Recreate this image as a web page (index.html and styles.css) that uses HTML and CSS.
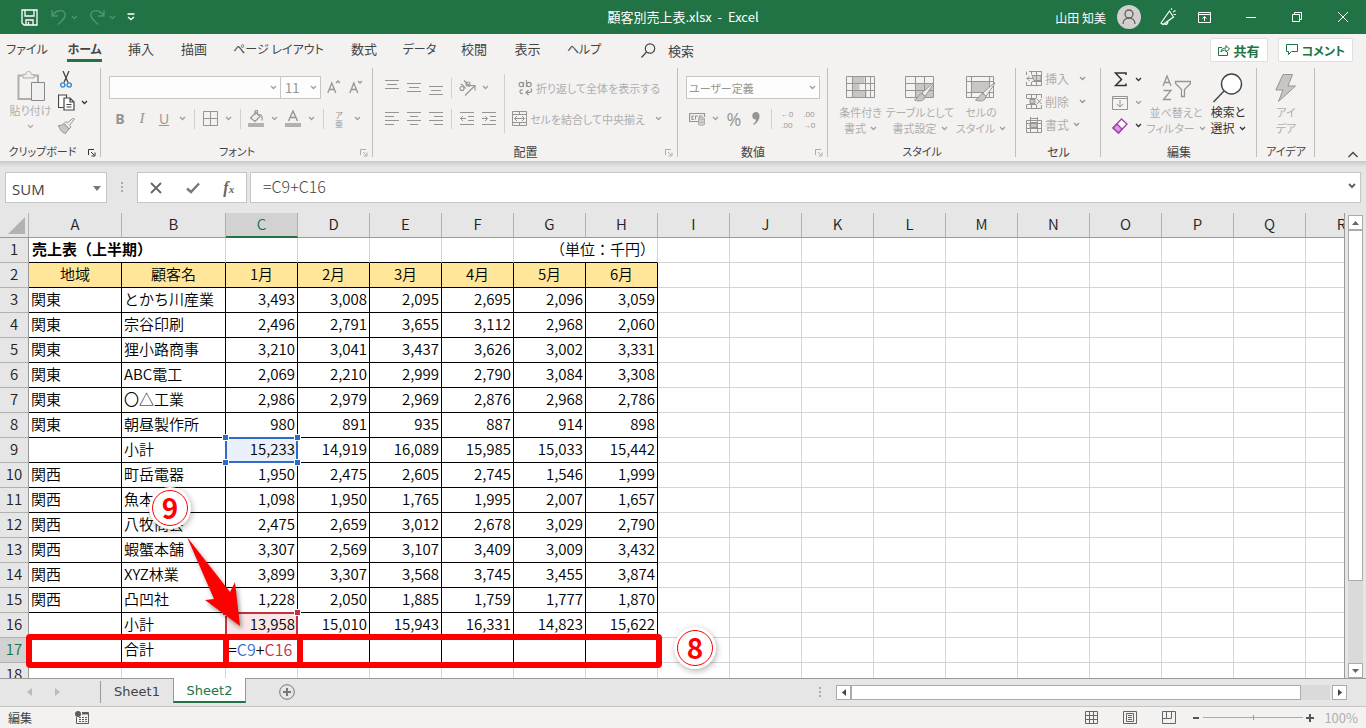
FILE: index.html
```html
<!DOCTYPE html>
<html lang="ja">
<head>
<meta charset="utf-8">
<title>顧客別売上表.xlsx - Excel</title>
<link rel="stylesheet" href="styles.css">
</head>
<body>

<svg class="defs" aria-hidden="true">
<symbol id="chev" viewBox="0 0 7 5"><path d="M1 1l2.500 2.500L6 1" fill="none" stroke="currentColor" stroke-width="1.300"/></symbol>
<symbol id="launch" viewBox="0 0 8 8"><path d="M.5 6V.5H6M3 3l3 3M7 3.500V7H3.500" fill="none" stroke="currentColor"/></symbol>
<symbol id="brush" viewBox="0 0 20 20"><path d="M19.500 .500L8 11l3 3.500L19.500 2z" fill="#eee" stroke="#979593"/><path d="M8 11.500c-3 0-3 4-7.500 6.500 5 2 10 1 10.500-3.500z" fill="#c8c6c4" stroke="#979593"/></symbol>
</svg>

<header class="titlebar">
	<div class="quick">
		<button aria-label="上書き保存"><svg width="17" height="17" viewBox="0 0 17 17" fill="none" stroke="#fff" stroke-width="1.300"><path d="M1 1h15v15H3l-2-2zM4 1v6h9V1M5 16v-5h7v5M7.500 13v3"/></svg></button>
		<button class="faded" aria-label="元に戻す"><svg width="16" height="17" viewBox="0 0 16 17" fill="none" stroke="currentColor" stroke-width="1.400"><path d="M1 1v6h6M1.500 6.500C5 1 12 0 14 4.500c1.500 4-3 6.500-7 11"/></svg></button>
		<button class="faded tiny" aria-label="元に戻す一覧"><svg width="7" height="5"><use href="#chev"/></svg></button>
		<button class="faded" aria-label="やり直し"><svg width="16" height="17" viewBox="0 0 16 17" fill="none" stroke="currentColor" stroke-width="1.400"><path d="M15 1v6H9M14.500 6.500C11 1 4 0 2 4.500c-1.500 4 3 6.500 7 11"/></svg></button>
		<button class="faded tiny" aria-label="やり直し一覧"><svg width="7" height="5"><use href="#chev"/></svg></button>
		<button aria-label="クイック アクセスのカスタマイズ"><svg width="8" height="8" viewBox="0 0 8 8" fill="none" stroke="#fff" stroke-width="1.400"><path d="M.5 1h7M1 4l3 2.500L7 4"/></svg></button>
	</div>
	<h1>顧客別売上表.xlsx&nbsp; -&nbsp; Excel</h1>
	<div class="account">
		<span>山田 知美</span>
		<svg class="avatar" width="24" height="24" viewBox="0 0 24 24"><circle cx="12" cy="12" r="12" fill="#d2d0ce"/><g fill="none" stroke="#605e5c" stroke-width="1.300"><circle cx="12" cy="9" r="4"/><path d="M6 19c0-8 12-8 12 0"/></g></svg>
		<button aria-label="近日公開の機能"><svg width="18" height="18" viewBox="0 0 18 18" fill="none" stroke="#fff" stroke-width="1.200"><path d="M10.500 3L2 15l2 1.500L14.500 9zM5.500 15c0 2.500 3.500 1.500 3.500-1.500M12 1.500l1-1M14 4l2.500-1.500M14.500 6.500H17"/></svg></button>
		<button class="display" aria-label="リボンの表示オプション"><svg width="13" height="11" viewBox="0 0 13 11" fill="none" stroke="#fff"><path d="M.5.5h12v10H.5zM.5 2.500h12M6.500 9V4.500M4.500 6.500l2-2 2 2"/></svg></button>
		<button class="win" aria-label="最小化"><svg width="10" height="10"><path d="M0 5.500h10" stroke="#fff"/></svg></button>
		<button class="win" aria-label="元のサイズに戻す"><svg width="10" height="10" fill="none" stroke="#fff"><path d="M.5 2.500h7v7h-7zM2.500 2.500v-2h7v7h-2"/></svg></button>
		<button class="win" aria-label="閉じる"><svg width="10" height="10" stroke="#fff"><path d="M0 0l10 10M10 0L0 10"/></svg></button>
	</div>
</header>

<nav class="tabs">
	<div class="tablist">
		<a href="#" class="kana">ファイル</a>
		<a href="#" class="kana active">ホーム</a>
		<a href="#">挿入</a>
		<a href="#">描画</a>
		<a href="#" class="kana">ページ レイアウト</a>
		<a href="#">数式</a>
		<a href="#" class="kana">データ</a>
		<a href="#">校閲</a>
		<a href="#">表示</a>
		<a href="#" class="kana">ヘルプ</a>
	</div>
	<button class="search"><svg width="15" height="15" viewBox="0 0 15 15" fill="none" stroke="#444" stroke-width="1.200"><circle cx="9" cy="5.500" r="4.700"/><path d="M5.500 9L.5 14.500"/></svg>検索</button>
	<div class="share">
		<button><svg width="12" height="12" viewBox="0 0 12 12" fill="none" stroke="#217346"><path d="M4 3.500H.5v8h9V8M3 8c0-3 2-4 5-4V1.500L11.500 5 8 8V6C5.500 6 4 6.500 3 8z"/></svg>共有</button>
		<button class="kana"><svg width="12" height="12" viewBox="0 0 12 12" fill="none" stroke="#217346"><path d="M.5.5h11v7h-6l-3 3v-3h-2z"/></svg>コメント</button>
	</div>
</nav>

<section class="ribbon">
	<div class="group clipboard">
		<div class="body">
			<button class="big">
				<svg width="28" height="31" viewBox="0 0 28 31" fill="none" stroke="#b0aeac"><path d="M14 28H1.500V4.500h4M17 4.500h4V11" stroke-width="2"/><path d="M6 7V3.500h2.500c0-4 6-4 6 0H17V7z" fill="#eee"/><path d="M14.500 11.500h13v18h-13z" fill="#f0f0f0" stroke="#888"/></svg>
				<span>貼り付け</span><svg width="7" height="5"><use href="#chev"/></svg>
			</button>
			<div class="stack">
				<div><button class="tool" aria-label="切り取り"><svg width="12" height="17" viewBox="0 0 12 17" fill="none"><path d="M3 0l5 11.500M9 0L4 11.500" stroke="#444" stroke-width="1.300"/><circle cx="2.800" cy="14" r="2.100" stroke="#2b88d8" stroke-width="1.400"/><circle cx="9.200" cy="14" r="2.100" stroke="#2b88d8" stroke-width="1.400"/></svg></button></div>
				<div class="on"><button class="tool" aria-label="コピー"><svg width="17" height="17" viewBox="0 0 17 17" fill="#fff" stroke="#444" stroke-width="1.200"><path d="M5.500 13.500h-5V1h8v3"/><path d="M6 4h6l4 4v8H6zM12 4v4h4M8.500 10.500h5M8.500 13h5"/></svg></button><button class="arrow" aria-label="コピーの種類"><svg width="7" height="5"><use href="#chev"/></svg></button></div>
				<div><button class="tool" aria-label="書式のコピー"><svg width="17" height="16" viewBox="0 0 17 16" fill="#c8c6c4" stroke="#979593"><path d="M16.500 1L14.500.5 9.500 5 8 3.500 6 5.500l5 5.500 2-2-1.500-1.500z" fill="#eee"/><path d="M6 5.500C4.500 7 3 7.500.5 7.500c1 4 3.500 7 7 8l3.500-4.500z"/></svg></button></div>
			</div>
		</div>
		<div class="caption">クリップボード<button class="launcher on" aria-label="クリップボードの詳細"><svg width="8" height="8"><use href="#launch"/></svg></button></div>
	</div>

	<div class="group font">
		<div class="body rows">
			<div class="row">
				<select class="fontname" aria-label="フォント"><option></option></select><select class="fontsize" aria-label="フォント サイズ"><option>11</option></select>
				<button class="tool" aria-label="拡大"><svg width="14" height="15" viewBox="0 0 14 15" fill="none" stroke="currentColor" stroke-width="1.300"><path d="M.8 13L4.800 3l4 10M2.200 9.500h5.200M9 3l2-2 2 2"/></svg></button><button class="tool" aria-label="縮小"><svg width="14" height="15" viewBox="0 0 14 15" fill="none" stroke="currentColor" stroke-width="1.300"><path d="M.8 13L4.800 3l4 10M2.200 9.500h5.200M9 1l2 2 2-2"/></svg></button>
			</div>
			<div class="row">
				<button class="tool letter"><b>B</b></button><button class="tool letter"><i>I</i></button><button class="tool letter"><u>U</u></button><button class="arrow" aria-label="下線の種類"><svg width="7" height="5"><use href="#chev"/></svg></button><span class="sep"></span>
				<button class="tool" aria-label="罫線"><svg width="15" height="15" viewBox="0 0 15 15" fill="none" stroke="currentColor"><path d="M.5.5h14v14H.5zM7.500.5v14M.5 7.500h14"/></svg></button><button class="arrow" aria-label="罫線の種類"><svg width="7" height="5"><use href="#chev"/></svg></button><span class="sep"></span>
				<button class="tool" aria-label="塗りつぶし"><svg width="16" height="17" viewBox="0 0 16 17"><path d="M2.500 8L8 2.500l4 4L7 11.500zM7 5V1.500c0-1.500 2.500-1.500 2.500 0V5M11 4.500c3 0 3.500 3 3 6" fill="#eee" stroke="currentColor" stroke-width="1.200"/><path d="M0 13h16v4H0z" fill="#b3b0ad"/></svg></button><button class="arrow" aria-label="塗りつぶしの色"><svg width="7" height="5"><use href="#chev"/></svg></button><button class="tool" aria-label="文字色"><svg width="16" height="17" viewBox="0 0 16 17"><path d="M3.500 11L8 1l4.500 10M5 7.500h6" fill="none" stroke="currentColor" stroke-width="1.400"/><path d="M0 13h16v4H0z" fill="#b3b0ad"/></svg></button><button class="arrow" aria-label="文字色の種類"><svg width="7" height="5"><use href="#chev"/></svg></button><span class="sep"></span>
				<button class="tool ruby"><span>ア</span><span>亜</span></button><button class="arrow" aria-label="ふりがなの種類"><svg width="7" height="5"><use href="#chev"/></svg></button>
			</div>
		</div>
		<div class="caption">フォント<button class="launcher" aria-label="フォントの詳細"><svg width="8" height="8"><use href="#launch"/></svg></button></div>
	</div>

	<div class="group align">
		<div class="body">
			<div class="rows">
				<div class="row">
					<button class="tool" aria-label="上揃え"><svg width="14" height="17" stroke="currentColor"><path d="M0 1.500h14M2 5.500h10M0 9.500h14"/></svg></button><button class="tool" aria-label="上下中央揃え"><svg width="14" height="17" stroke="currentColor"><path d="M0 4.500h14M2 8.500h10M0 12.500h14"/></svg></button><button class="tool" aria-label="下揃え"><svg width="14" height="17" stroke="currentColor"><path d="M0 7.500h14M2 11.500h10M0 15.500h14"/></svg></button><span class="sep"></span>
					<button class="tool" aria-label="方向"><svg width="17" height="16" viewBox="0 0 17 16" fill="none" stroke="currentColor" stroke-width="1.100"><path d="M6 15.500L15.500 6M11 5.500h5v5"/><circle cx="3" cy="8.500" r="2"/><path d="M1.500 4.500c2-1 3 1 5 4M5 .5l6 6"/><circle cx="9" cy="4" r="2"/></svg></button><button class="arrow" aria-label="方向の種類"><svg width="7" height="5"><use href="#chev"/></svg></button>
				</div>
				<div class="row">
					<button class="tool" aria-label="左揃え"><svg width="14" height="14" stroke="currentColor"><path d="M0 .5h14M0 4.500h9M0 8.500h14M0 12.500h9"/></svg></button><button class="tool" aria-label="中央揃え"><svg width="14" height="14" stroke="currentColor"><path d="M0 .5h14M3 4.500h8M0 8.500h14M3 12.500h8"/></svg></button><button class="tool" aria-label="右揃え"><svg width="14" height="14" stroke="currentColor"><path d="M0 .5h14M5 4.500h9M0 8.500h14M5 12.500h9"/></svg></button><span class="sep"></span>
					<button class="tool" aria-label="インデントを減らす"><svg width="14" height="14" fill="none" stroke="currentColor"><path d="M0 .5h14M8 4.500h6M8 8.500h6M0 12.500h14M6 6.500H.5M3 4L.5 6.500 3 9"/></svg></button><button class="tool" aria-label="インデントを増やす"><svg width="14" height="14" fill="none" stroke="currentColor"><path d="M0 .5h14M8 4.500h6M8 8.500h6M0 12.500h14M0 6.500h5.500M3 4l2.500 2.500L3 9"/></svg></button>
				</div>
			</div>
			<span class="sep tall"></span>
			<div class="rows">
				<button class="row wide"><svg width="15" height="17" viewBox="0 0 15 17" fill="none" stroke="currentColor" stroke-width="1.200"><circle cx="3.200" cy="5.500" r="2.200"/><path d="M5.500 3v5M8.500 1v7M5 11c-4-1.500-4 4.500 0 3.500M13 9.500c2 4-1 4-5 4M10.500 11L8 13.500l2.500 2.500"/><circle cx="11" cy="5.500" r="2.200"/></svg>折り返して全体を表示する</button>
				<div class="row"><button class="row wide"><svg width="15" height="15" viewBox="0 0 15 15" fill="none" stroke="currentColor"><path d="M.5.5h14v14H.5zM7.500.5v3M7.500 11.500v3M.5 3.500h14M.5 11.500h14"/><path d="M2.500 7.500h10M5 5L2.500 7.500 5 10M10 5l2.500 2.500L10 10"/></svg>セルを結合して中央揃え</button><button class="arrow" aria-label="結合の種類"><svg width="7" height="5"><use href="#chev"/></svg></button></div>
			</div>
		</div>
		<div class="caption">配置<button class="launcher" aria-label="配置の詳細"><svg width="8" height="8"><use href="#launch"/></svg></button></div>
	</div>

	<div class="group number">
		<div class="body rows">
			<div class="row"><select class="format" aria-label="表示形式"><option>ユーザー定義</option></select></div>
			<div class="row">
				<button class="tool" aria-label="通貨"><svg width="17" height="14" viewBox="0 0 17 14" fill="none" stroke="currentColor"><path d="M9 9.500H.5v-8h15V5M5 4H3v3.500h2M6.500 7.500V4H9M10.500 6V4h3" stroke-width="1.200"/><path d="M9.500 6.500v6c0 1.300 6 1.300 6 0v-6c0-1.300-6-1.300-6 0s6 1.300 6 0M9.500 9.500c0 1.300 6 1.300 6 0" fill="#d2d0ce" stroke="#b0aeac"/></svg></button><button class="arrow" aria-label="通貨の種類"><svg width="7" height="5"><use href="#chev"/></svg></button><button class="tool percent">%</button><button class="tool" aria-label="桁区切り"><svg width="8" height="13" viewBox="0 0 8 13"><path d="M4 0c5 0 5 9-2 13l-1-1c2-1.500 3-3 3-4.500C-1 8-1 0 4 0z" fill="currentColor"/></svg></button><span class="sep"></span>
				<button class="tool decimal"><span>←0</span><span>.00</span></button><button class="tool decimal"><span>.00</span><span>→0</span></button>
			</div>
		</div>
		<div class="caption">数値<button class="launcher" aria-label="数値の詳細"><svg width="8" height="8"><use href="#launch"/></svg></button></div>
	</div>

	<div class="group styles">
		<div class="body">
			<button class="big"><svg width="29" height="28" viewBox="0 0 29 28" fill="none" stroke="#979593"><path d="M6.500 3h12v7h-5v7h7v7h-14z" fill="#c8c6c4" stroke="none"/><path d="M.5 2.500h28v21H.5zM6.500 2.500v21M19.500 2.500v21M24.500 2.500v21M.5 9.500h28M.5 16.500h28"/></svg><span>条件付き</span><span>書式 <svg width="7" height="5"><use href="#chev"/></svg></span></button>
			<button class="big"><svg width="31" height="28" viewBox="0 0 31 28"><path d="M10 10h18v13H10z" fill="#c8c6c4"/><path d="M.5 2.500h28v21H.5zM10.500 2.500v21M19.500 2.500v21M.5 9.500h28M.5 16.500h28" fill="none" stroke="#979593"/><use href="#brush" x="8" y="8" width="22" height="20"/></svg><span>テーブルとして</span><span>書式設定 <svg width="7" height="5"><use href="#chev"/></svg></span></button>
			<button class="big"><svg width="31" height="28" viewBox="0 0 31 28"><path d="M6 8h18v10H6z" fill="#c8c6c4"/><path d="M.5 2.500h27v21H.5zM5.500 2.500v21M23.500 2.500v21M.5 7.500h27M.5 18.500h27" fill="none" stroke="#979593"/><use href="#brush" x="8" y="8" width="22" height="20"/></svg><span>セルの</span><span>スタイル <svg width="7" height="5"><use href="#chev"/></svg></span></button>
		</div>
		<div class="caption">スタイル</div>
	</div>

	<div class="group cells">
		<div class="body stack">
			<button><svg width="16" height="15" viewBox="0 0 16 15" fill="none" stroke="currentColor"><path d="M6 4.500h9v5H8z" fill="#d2d0ce"/><path d="M3 .5h12.500v14H.5V11M.5 4V.5M5.500.5v3M10.500.5v14M5.500 11v3M6 10.500h9M7 7.500H.5M3.500 5L1 7.500 3.500 10"/></svg><span>挿入</span><svg width="7" height="5"><use href="#chev"/></svg></button>
			<button><svg width="16" height="15" viewBox="0 0 16 15" fill="none" stroke="currentColor"><path d="M4 5.500h5v4H4z" fill="#c8c6c4"/><path d="M.5 4V.5h15V4M5.500.5V4M10.500.5V4M.5 11v3.500h15V11M5.500 11v3.500M10.500 11v3.500M.5 4.500h10M.5 10.500h10M11 5l4.500 5M15.500 5L11 10"/></svg><span>削除</span><svg width="7" height="5"><use href="#chev"/></svg></button>
			<button class="near"><svg width="16" height="16" viewBox="0 0 16 16" fill="none" stroke="currentColor"><path d="M4 5.500h7v5H4z" fill="#c8c6c4"/><path d="M.5 3.500h15v12H.5zM4.500 0v15M11.500 0v15M.5 6.500h15M.5 11.500h15M4.500 1.500h7"/></svg><span>書式</span><svg width="7" height="5"><use href="#chev"/></svg></button>
		</div>
		<div class="caption">セル</div>
	</div>

	<div class="group edit">
		<div class="body">
			<div class="stack">
				<div class="on"><button class="tool" aria-label="合計"><svg width="13" height="15" viewBox="0 0 13 15" fill="none" stroke="#333" stroke-width="1.500"><path d="M12 3V1H1.500l6 6.500-6 6H12v-2"/></svg></button><button class="arrow" aria-label="合計の種類"><svg width="7" height="5"><use href="#chev"/></svg></button></div>
				<div><button class="tool" aria-label="フィル"><svg width="16" height="14" viewBox="0 0 16 14" fill="none" stroke="currentColor"><path d="M.5.5h15v13H.5zM.5 2.500h15M8 4v7M5 8l3 3 3-3"/></svg></button><button class="arrow" aria-label="フィルの種類"><svg width="7" height="5"><use href="#chev"/></svg></button></div>
				<div class="on"><button class="tool" aria-label="クリア"><svg width="16" height="16" viewBox="0 0 16 16" stroke="#a33bab" stroke-width="1.300"><path d="M9.500 1L15 6 6.500 15 1 10z" fill="#fff"/><path d="M5 6l5 5-3.500 4L1 10z" fill="#d59dda"/></svg></button><button class="arrow" aria-label="クリアの種類"><svg width="7" height="5"><use href="#chev"/></svg></button></div>
			</div>
			<button class="big"><svg width="29" height="28" viewBox="0 0 29 28" fill="none" stroke="#979593" stroke-width="1.300"><path d="M1 12L5 2l4 10M2.500 8.500h5M1.500 16.500H9l-7.500 9H9M13.500 7.500h15v2l-6 6v7h-3v-7l-6-6z"/></svg><span>並べ替えと</span><span>フィルター <svg width="7" height="5"><use href="#chev"/></svg></span></button>
			<button class="big on"><svg width="30" height="30" viewBox="0 0 30 30" fill="#fff" stroke="#444" stroke-width="1.400"><circle cx="18.500" cy="11" r="10"/><path d="M11 18L.5 29"/></svg><span>検索と</span><span>選択 <svg width="7" height="5"><use href="#chev"/></svg></span></button>
		</div>
		<div class="caption">編集</div>
	</div>

	<div class="group ideas">
		<div class="body"><button class="big"><svg width="22" height="28" viewBox="0 0 22 28"><path d="M8 .5h9.500L13 12h7.500L3.500 27.500 8 16H.8z" fill="#c8c6c4" stroke="#979593"/></svg><span>アイ</span><span>デア</span></button></div>
		<div class="caption">アイデア</div>
	</div>
	<button class="collapse" aria-label="リボンを折りたたむ"><svg width="10" height="7" fill="none" stroke="#444" stroke-width="1.400"><path d="M.5 6L5 1.500 9.500 6"/></svg></button>
</section>

<section class="formulabar">
	<div class="namebox"><input value="SUM" aria-label="名前ボックス"><svg width="8" height="5"><path d="M0 0h8L4 5z" fill="#777"/></svg></div>
	<span class="dots"></span>
	<div class="fxbuttons">
		<button aria-label="キャンセル"><svg width="12" height="12" stroke="#666" stroke-width="1.800"><path d="M1 1l10 10M11 1L1 11"/></svg></button>
		<button aria-label="入力"><svg width="14" height="12" fill="none" stroke="#777" stroke-width="2.400"><path d="M1 6.500L5 10l8-8.500"/></svg></button>
		<button class="fx" aria-label="関数の挿入"><i>f<small>x</small></i></button>
	</div>
	<div class="formula"><input value="=C9+C16" aria-label="数式バー"><svg width="8" height="6" fill="none" stroke="#666" stroke-width="2"><path d="M1 1l3 3 3-3"/></svg></div>
</section>

<main class="workspace">
	<div class="sheet">
		<table id="grid"></table>
		<div class="mark-row"></div>
		<div class="mark-cell"></div>
		<svg class="mark-arrow" width="60" height="96" viewBox="0 0 60 96"><path d="M2 2l43 55 5-10 5 44-35-26 9-1z" fill="#f00"/></svg>
		<div class="badge nine">9</div>
		<div class="badge eight">8</div>
	</div>
	<div class="vscroll">
		<button aria-label="上へ"><svg width="7" height="4"><path d="M0 4h7L3.500 0z" fill="#666"/></svg></button>
		<div class="track"><div class="thumb"></div></div>
		<button aria-label="下へ"><svg width="7" height="4"><path d="M0 0h7L3.500 4z" fill="#666"/></svg></button>
	</div>
</main>

<section class="sheettabs">
	<div class="navs">
		<button aria-label="前のシート"><svg width="5" height="8"><path d="M5 0v8L0 4z" fill="#bbb"/></svg></button>
		<button aria-label="次のシート"><svg width="5" height="8"><path d="M0 0v8l5-4z" fill="#bbb"/></svg></button>
	</div>
	<button class="sheettab">Sheet1</button>
	<button class="sheettab current">Sheet2</button>
	<button class="addsheet" aria-label="新しいシート"><svg width="16" height="16" viewBox="0 0 16 16" fill="none" stroke="#777"><circle cx="8" cy="8" r="7.300"/><path d="M4 8h8M8 4v8" stroke-width="2"/></svg></button>
	<span class="dots"></span>
	<div class="hscroll">
		<button aria-label="左へ"><svg width="4" height="7"><path d="M4 0v7L0 3.500z" fill="#444"/></svg></button>
		<div class="track"><div class="thumb"></div></div>
		<button aria-label="右へ"><svg width="4" height="7"><path d="M0 0v7l4-3.500z" fill="#444"/></svg></button>
	</div>
</section>

<footer class="status">
	<span>編集</span>
	<button aria-label="マクロの記録"><svg width="14" height="13" viewBox="0 0 14 13" fill="none" stroke="#605e5c"><path d="M1.500 6v6.500h12v-11H7M7 3h6.500M4 6.500h2M7 6.500h2M10 6.500h2M4 8.500h2M7 8.500h2M10 8.500h2M4 10.500h2M7 10.500h2M10 10.500h2"/><path d="M7 2h6" stroke-width="2"/><circle cx="3" cy="3" r="3" fill="#605e5c" stroke="none"/></svg></button>
	<div class="views">
		<button aria-label="標準"><svg width="13" height="13" fill="none" stroke="#666"><path d="M.5.5h12v12H.5zM4.500.5v12M8.500.5v12M.5 4.500h12M.5 8.500h12"/></svg></button>
		<button aria-label="ページ レイアウト"><svg width="14" height="13" fill="none" stroke="#666"><path d="M.5.5h13v12H.5zM3.500 2.500h7v8h-7zM5 4.500h4M5 6.500h4M5 8.500h4"/></svg></button>
		<button aria-label="改ページ プレビュー"><svg width="14" height="13" fill="none" stroke="#666"><path d="M.5.5h13v12H.5zM4.500.5v7M9.500.5v7M.5 7.500h9"/></svg></button>
	</div>
	<button aria-label="縮小"><svg width="6" height="6"><path d="M0 3h6" stroke="#555" stroke-width="2"/></svg></button>
	<input type="range" min="0" max="100" value="50" aria-label="ズーム">
	<button aria-label="拡大"><svg width="8" height="8"><path d="M0 4h8M4 0v8" stroke="#555" stroke-width="2"/></svg></button>
	<span class="zoom">100%</span>
</footer>

<script src="script.js"></script>
</body>
</html>
```

FILE: script.js
```js
/* Rows 2 to 17 of the sheet, columns A to H. */
var rows = [
	["地域", "顧客名", "1月", "2月", "3月", "4月", "5月", "6月"],
	["関東", "とかち川産業", "3,493", "3,008", "2,095", "2,695", "2,096", "3,059"],
	["関東", "宗谷印刷", "2,496", "2,791", "3,655", "3,112", "2,968", "2,060"],
	["関東", "狸小路商事", "3,210", "3,041", "3,437", "3,626", "3,002", "3,331"],
	["関東", "ABC電工", "2,069", "2,210", "2,999", "2,790", "3,084", "3,308"],
	["関東", "〇△工業", "2,986", "2,979", "2,969", "2,876", "2,968", "2,786"],
	["関東", "朝昼製作所", "980", "891", "935", "887", "914", "898"],
	["", "小計", "15,233", "14,919", "16,089", "15,985", "15,033", "15,442"],
	["関西", "町岳電器", "1,950", "2,475", "2,605", "2,745", "1,546", "1,999"],
	["関西", "魚本水産", "1,098", "1,950", "1,765", "1,995", "2,007", "1,657"],
	["関西", "八牧商会", "2,475", "2,659", "3,012", "2,678", "3,029", "2,790"],
	["関西", "蝦蟹本舗", "3,307", "2,569", "3,107", "3,409", "3,009", "3,432"],
	["関西", "XYZ林業", "3,899", "3,307", "3,568", "3,745", "3,455", "3,874"],
	["関西", "凸凹社", "1,228", "2,050", "1,885", "1,759", "1,777", "1,870"],
	["", "小計", "13,958", "15,010", "15,943", "16,331", "14,823", "15,622"],
	["", "合計", "", "", "", "", "", ""]
];
var letters = "ABCDEFGHIJKLMNOPQR".split("");
var handles = '<i class="tl"></i><i class="tr"></i><i class="bl"></i><i class="br"></i>';

/* Empty cells from column I on. */
function blanks(n) {
	return new Array(n + 1).join("<td></td>");
}

function cell(text, row, col) {
	var name = letters[col] + row;
	var cls = "data" + (row == 2 ? " head" : col > 1 ? " num" : "");

	if (name == "C9") {
		return '<td class="' + cls + ' ref blue">' + text + handles + "</td>";
	}
	if (name == "C16") {
		return '<td class="' + cls + ' ref red">' + text + handles + "</td>";
	}
	if (name == "C17") {
		return '<td class="data entry">=<span class="c9">C9</span>+<span class="c16">C16</span></td>';
	}
	return '<td class="' + cls + '">' + text + "</td>";
}

var html = '<colgroup><col class="nums"><col class="a"><col class="b"><col span="16"></colgroup>';

html += '<thead><tr><th class="corner"><svg width="17" height="17"><path d="M17 0v17H0z" fill="#b2b2b2"/></svg></th>';
letters.forEach(function (l) {
	html += "<th" + (l == "C" ? ' class="sel"' : "") + ">" + l + "</th>";
});
html += "</tr></thead><tbody>";

html += '<tr class="first"><th>1</th><td colspan="2" class="heading">売上表（上半期）</td>' + blanks(4) +
	'<td colspan="2" class="num">（単位：千円）</td>' + blanks(10) + "</tr>";

rows.forEach(function (r, i) {
	var n = i + 2;
	html += "<tr><th" + (n == 17 ? ' class="sel"' : "") + ">" + n + "</th>";
	r.forEach(function (text, col) {
		html += cell(text, n, col);
	});
	html += blanks(10) + "</tr>";
});
html += "<tr><th>18</th>" + blanks(18) + "</tr></tbody>";

document.getElementById("grid").innerHTML = html;
```

FILE: styles.css
```css
* {
	box-sizing: border-box;
}

body {
	margin: 0;
	height: 100vh;
	display: flex;
	flex-direction: column;
	overflow: hidden;
	background: #e6e6e6;
	color: #444;
	font-family: "Noto Sans CJK JP", sans-serif;
	font-size: 12px;
	font-feature-settings: "palt";
}

button, input, select {
	font: inherit;
	font-feature-settings: inherit;
	color: inherit;
	border: 0;
	margin: 0;
	padding: 0;
	background: none;
}

button {
	display: flex;
	align-items: center;
	justify-content: center;
	white-space: nowrap;
}

svg {
	display: block;
	flex: none;
}

.defs {
	width: 0;
	height: 0;
	position: absolute;
}

/* title bar */
.titlebar {
	height: 34px;
	flex: none;
	display: grid;
	grid-template-columns: 1fr auto 1fr;
	align-items: center;
	background: #217346;
	color: #fff;
}

.titlebar h1 {
	margin: 0;
	font-size: 13px;
	line-height: 28px;
	font-weight: normal;
	font-feature-settings: normal;
}

.quick {
	display: flex;
	align-items: center;
	padding-left: 18px;
}

.quick button {
	width: 22px;
}

.quick .faded {
	width: 20px;
	margin-left: 9px;
}

.quick .tiny {
	width: 8px;
	margin-left: 1px;
}

.quick button:last-child {
	margin-left: 4px;
}

.faded {
	color: #4f9470;
}

.account {
	display: flex;
	align-items: center;
	justify-content: flex-end;
}

.avatar {
	margin: 0 9px 0 11px;
}

.account button {
	width: 36px;
}

.account .display {
	margin-right: 6px;
}

.account .win {
	width: 46px;
}

/* ribbon tabs */
.tabs {
	height: 32px;
	flex: none;
	display: flex;
	align-items: center;
	background: #f3f2f1;
	font-size: 13px;
}

.tablist {
	display: grid;
	grid-template-columns: 54px 61px 52px 54px 115px 56px 55px 54px 53px 60px;
	align-self: stretch;
	justify-items: center;
}

.tablist a {
	height: 28px;
	line-height: 30px;
	color: #444;
	text-decoration: none;
	white-space: nowrap;
}

.tabs .kana {
	font-size: 12px;
}

.tablist .active {
	font-weight: bold;
	border-bottom: 3px solid #217346;
}

.search {
	gap: 12px;
	margin-left: 27px;
}

.share {
	display: flex;
	gap: 10px;
	margin-left: auto;
	padding-right: 13px;
}

.share button {
	height: 24px;
	gap: 4px;
	padding: 0 7px;
	background: #fff;
	border: 1px solid #e1dfdd;
	border-radius: 2px;
	color: #217346;
	font-weight: bold;
}

/* ribbon */
.ribbon {
	height: 95px;
	flex: none;
	display: flex;
	background: #f3f2f1;
	color: #b0aeac;
}

.group {
	display: flex;
	flex-direction: column;
	background: linear-gradient(#c0bebc, #c0bebc) right 2px / 1px 89px no-repeat;
}

.clipboard { width: 101px; }
.font { width: 272px; }
.align { width: 305px; }
.number { width: 150px; }
.styles { width: 188px; }
.cells { width: 85px; }
.edit { width: 156px; }
.ideas { width: 58px; }

.body {
	flex: 1;
	display: flex;
	padding: 0 0 0 8px;
}

.clipboard .body {
	padding: 0 6px;
}

.caption {
	height: 19px;
	position: relative;
	text-align: center;
	line-height: 19px;
	color: #444;
}

.clipboard .caption {
	padding-right: 16px;
	font-size: 11px;
}

.ideas .caption, .font .caption, .styles .caption {
	font-size: 11px;
}

.launcher {
	position: absolute;
	right: 5px;
	top: 7px;
	color: #b0aeac;
}

.rows, .body.rows {
	display: flex;
	flex-direction: column;
	gap: 8px;
	padding-top: 10px;
}

.row {
	height: 23px;
	display: flex;
	align-items: center;
}

.tool {
	width: 22px;
	height: 22px;
	color: #979593;
}

.arrow {
	width: 15px;
	height: 22px;
	color: #a19f9d;
}

.big > span svg {
	color: #a19f9d;
}

.ribbon .on, .ribbon .on .arrow, .ribbon .on svg {
	color: #333;
}

.sep {
	width: 1px;
	height: 20px;
	margin: 0 4px;
	background: #d2d0ce;
}

.sep.tall {
	height: 59px;
	margin-top: 8px;
}

.letter {
	font-family: "Open Sans", sans-serif;
	font-size: 14px;
}

.letter i {
	font-family: "Liberation Serif", serif;
	font-size: 15px;
}

.percent {
	font-family: "Open Sans", sans-serif;
	font-size: 18px;
}

.ruby, .decimal {
	flex-direction: column;
	font-size: 8px;
	line-height: 9px;
}

.decimal {
	font-family: "Open Sans", sans-serif;
	font-size: 8px;
	line-height: 11px;
}

.ribbon select {
	flex: none;
	height: 23px;
	padding: 0 4px;
	border: 1px solid #c8c6c4;
	appearance: none;
	color: #979593;
	background: #fdfdfd url("data:image/svg+xml,%3Csvg xmlns='http://www.w3.org/2000/svg' width='7' height='5'%3E%3Cpath d='M1 1l2.500 2.500L6 1' fill='none' stroke='%23a19f9d' stroke-width='1.300'/%3E%3C/svg%3E") right 3px center no-repeat;
}

.ribbon .fontname {
	width: 172px;
}

.ribbon .fontsize {
	width: 40px;
	margin-right: 2px;
	font-size: 13px;
	border-left-width: 0;
}

.ribbon .format {
	width: 134px;
	padding: 0 2px;
	font-size: 11px;
}

.wide {
	gap: 3px;
	padding-left: 3px;
	font-size: 11px;
}

.wide + .arrow {
	margin-left: 6px;
}

.wide svg {
	color: #979593;
}

.big {
	flex-direction: column;
	justify-content: flex-start;
	height: 70px;
	padding-top: 5px;
	font-size: 11px;
	line-height: 16px;
}

.big > svg:first-child {
	margin: auto;
}

.big > span {
	display: flex;
	align-items: center;
	gap: 4px;
}

.clipboard .big {
	width: 49px;
}

.clipboard .big > svg:last-child {
	margin: 6px 0 7px;
}

.styles .body {
	display: grid;
	grid-template-columns: 49px 70px 52px;
}

.stack {
	display: flex;
	flex-direction: column;
	padding-top: 2px;
}

.stack > * {
	height: 23px;
	display: flex;
	align-items: center;
}

.cells .stack {
	padding: 1px 10px 0;
	align-items: flex-start;
}

.cells .stack button {
	gap: 3px;
	color: #b0aeac;
}

.cells .stack svg {
	color: #979593;
}

.cells .stack svg:last-child {
	margin-left: 7px;
}

.cells .near svg:last-child {
	margin-left: 1px;
}

.edit .big {
	width: 60px;
}

.edit .big.on {
	width: 44px;
	font-size: 12px;
}

.ideas .body {
	padding: 0;
	justify-content: center;
}

.collapse {
	margin: auto 8px 3px auto;
}

/* formula bar */
.formulabar {
	flex: none;
	display: flex;
	align-items: center;
	height: 52px;
	padding: 1px 5px 0;
	background: linear-gradient(#c8c8c8, #e6e6e6 6px);
}

.namebox, .fxbuttons, .formula {
	height: 31px;
	display: flex;
	align-items: center;
	background: #fff;
	border: 1px solid #c6c6c6;
}

.namebox {
	width: 102px;
	padding: 2px 5px 0 6px;
}

.namebox input, .formula input {
	flex: 1;
	min-width: 0;
	font-family: "Open Sans", sans-serif;
	font-size: 15px;
}

.dots {
	width: 2px;
	height: 11px;
	margin: 0 14px;
	background: repeating-linear-gradient(#aaa 0 2px, transparent 2px 4px);
}

.fxbuttons {
	width: 110px;
	justify-content: space-around;
}

.fx {
	font-family: "Liberation Serif", serif;
	font-weight: bold;
	font-size: 16px;
	color: #666;
}

.fx small {
	font-size: 11px;
}

.formula {
	flex: 1;
	margin-left: 3px;
	padding: 0 4px 3px 12px;
}

.formula input {
	font-family: "Noto Sans CJK JP", sans-serif;
	font-size: 16px;
	font-weight: 300;
	line-height: 24px;
	font-feature-settings: normal;
}

/* sheet */
.workspace {
	flex: 1;
	min-height: 0;
	display: flex;
}

.sheet {
	flex: 1;
	position: relative;
	overflow: hidden;
	border-right: 1px solid #999;
	background: #fff;
}

table {
	width: 1378px;
	table-layout: fixed;
	border-collapse: separate;
	border-spacing: 0;
	font-size: 15px;
	font-weight: 350;
	line-height: 22px;
	font-feature-settings: normal;
	color: #000;
}

col { width: 72px; }
.nums { width: 29px; }
.a { width: 93px; }
.b { width: 104px; }

th, td {
	height: 25px;
	padding: 0 2px 2px;
	border-right: 1px solid #d4d4d4;
	border-bottom: 1px solid #d4d4d4;
	white-space: nowrap;
}

th {
	padding: 0 0 2px;
	font-weight: 350;
	background: #e6e6e6;
	border-color: #b1b1b1;
	color: #222;
}

thead th {
	border-bottom-color: #999;
}

tbody th {
	border-right-color: #999;
}

.corner svg {
	margin: 3px 0 0 8px;
}

th.sel {
	background: #d2d2d2;
	color: #217346;
}

thead .sel {
	padding-bottom: 1px;
	border-bottom: 2px solid #217346;
}

td.data, .first td:nth-child(-n+7) {
	border-bottom-color: #000;
}

td.data {
	border-right-color: #000;
}

.head {
	background: #ffe699;
	text-align: center;
}

.num {
	text-align: right;
}

.heading {
	padding-left: 3px;
	font-weight: bold;
}

.ref {
	position: relative;
}

.ref::before {
	content: "";
	position: absolute;
	inset: -1px;
	border: 2px solid;
}

.blue { background: #e9f0fa; }
.blue::before { border-color: #2f6bc8; }
.blue i { background: #2f6bc8; }
.red { background: #f9e7e8; }
.red::before { border-color: #c4323f; }
.red i { background: #c4323f; }

.ref i {
	position: absolute;
	width: 5px;
	height: 5px;
	outline: 1px solid #fff;
}

.tl { left: -3px; top: -3px; }
.tr { right: -3px; top: -3px; }
.bl { left: -3px; bottom: -3px; }
.br { right: -3px; bottom: -3px; }

.entry {
	font-size: 16px;
}

.c9 { color: #3c6cc8; }
.c16 { color: #c4323f; }

/* red marks over the sheet */
.mark-row, .mark-cell {
	position: absolute;
	top: 421px;
	height: 34px;
	border: 6px solid #f00;
}

.mark-row {
	left: 26px;
	width: 636px;
	border-radius: 4px;
}

.mark-cell {
	left: 223px;
	width: 80px;
}

.mark-arrow {
	position: absolute;
	left: 185px;
	top: 322px;
	filter: drop-shadow(2px 3px 2px rgba(0, 0, 0, .4));
}

.badge {
	position: absolute;
	width: 36px;
	height: 36px;
	border: 1px solid #f00;
	border-radius: 50%;
	background: #fff;
	box-shadow: 0 0 0 3px #fff, 1px 2px 6px 3px rgba(0, 0, 0, .3);
	color: #f00;
	font: bold 28px/32px "Noto Sans CJK JP", sans-serif;
	text-align: center;
}

.nine { left: 152px; top: 277px; }
.eight { left: 677px; top: 417px; }

/* scroll bars */
.vscroll {
	width: 21px;
	display: flex;
	flex-direction: column;
	align-items: center;
	padding: 2px 0 0;
}

.vscroll button, .hscroll button {
	width: 15px;
	height: 15px;
	background: #fff;
	border: 1px solid #ababab;
}

.vscroll .track {
	flex: 1;
	width: 15px;
	background: #dadada;
}

.track .thumb {
	background: #fff;
	border: 1px solid #ababab;
}

.vscroll .thumb {
	height: 81%;
}

/* sheet tabs */
.sheettabs {
	flex: none;
	height: 28px;
	display: flex;
	align-items: flex-start;
	border-top: 1px solid #999;
	font-family: "DejaVu Sans", sans-serif;
	font-size: 13px;
}

.navs {
	display: flex;
	gap: 23px;
	width: 101px;
	height: 22px;
	margin-top: 2px;
	padding-left: 27px;
	border-right: 1px solid #999;
}

.sheettab {
	width: 72px;
	height: 25px;
}

.sheettab.current {
	width: 73px;
	margin-top: -1px;
	padding-top: 2px;
	background: #fff;
	border: 1px solid #999;
	border-top: 0;
	border-bottom: 2px solid #217346;
	color: #217346;
}

.addsheet {
	height: 25px;
	margin-left: 33px;
}

.sheettabs .dots {
	height: 10px;
	margin: 8px 15px 0 auto;
}

.hscroll {
	width: 38%;
	max-width: 511px;
	display: flex;
	margin: 6px 19px 0 0;
}

.hscroll .track {
	flex: 1;
	height: 15px;
	margin-right: 2px;
	background: #dadada;
}

.hscroll .thumb {
	width: 94%;
	height: 15px;
}

/* status bar */
.status {
	height: 22px;
	flex: none;
	display: flex;
	align-items: center;
	padding: 0 8px;
	border-top: 1px solid #c6c6c6;
	background: #f3f2f1;
}

.status > span:first-child {
	margin-right: 43px;
}

.views {
	display: flex;
	gap: 25px;
	margin: 0 17px 0 auto;
}

.status input {
	appearance: none;
	width: 100px;
	height: 11px;
	margin: 0 3px 0 4px;
	background: linear-gradient(#aaa, #aaa) 0 5px / 100% 1px no-repeat;
}

.status input::-webkit-slider-thumb {
	appearance: none;
	width: 1px;
	height: 5px;
	background: #999;
}

.zoom {
	margin-left: 10px;
	color: #b0aeac;
	font-size: 13px;
}
```
